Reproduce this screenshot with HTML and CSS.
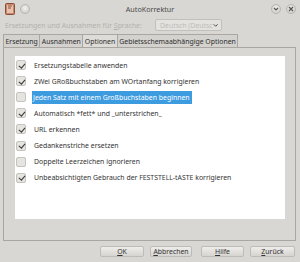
FILE: index.html
```html
<!DOCTYPE html>
<html lang="de">
<head>
<meta charset="utf-8">
<title>AutoKorrektur</title>
<link rel="stylesheet" href="styles.css">
</head>
<body>
<div class="window">
  <div class="titlebar">
    <div class="tb-left">
      <svg class="appicon" width="10" height="12" viewBox="0 0 10 12"><rect x="0.5" y="0.5" width="9" height="11" rx="1" fill="#c9876a" stroke="#8a4f3a"/><rect x="2" y="2" width="6" height="8" fill="#e9c3b0"/><path d="M3 3h4M3 5h3" stroke="#8a4f3a" stroke-width="1"/></svg>
      <span class="roundbtn"></span>
    </div>
    <div class="title">AutoKorrektur</div>
    <div class="tb-right">
      <span class="roundbtn"><svg width="6" height="6" viewBox="0 0 6 6"><path d="M1 2l2 2 2-2" fill="none" stroke="#555" stroke-width="1.2"/></svg></span>
      <span class="roundbtn"><svg width="6" height="6" viewBox="0 0 6 6"><path d="M1 1l4 4M5 1l-4 4" stroke="#555" stroke-width="1.2"/></svg></span>
    </div>
  </div>
  <div class="langrow">
    <span class="langlabel">Ersetzungen und Ausnahmen für <u>S</u>prache:</span>
    <span class="combo"><span class="combotext">Deutsch (Deutsc</span><svg width="7" height="5" viewBox="0 0 7 5"><path d="M1 1l2.5 2.5L6 1" fill="none" stroke="#444" stroke-width="1.3"/></svg></span>
  </div>
  <div class="tabs">
    <span class="tab">Ersetzung</span>
    <span class="tab">Ausnahmen</span>
    <span class="tab active">Optionen</span>
    <span class="tab">Gebietsschemaabhängige Optionen</span>
  </div>
  <div class="panel">
    <div class="list">
      <div class="row"><span class="cb checked"></span><span class="label">Ersetzungstabelle anwenden</span></div>
      <div class="row"><span class="cb checked"></span><span class="label">ZWei GRoßbuchstaben am WOrtanfang korrigieren</span></div>
      <div class="row"><span class="cb"></span><span class="label sel">Jeden Satz mit einem Großbuchstaben beginnen</span></div>
      <div class="row"><span class="cb checked"></span><span class="label">Automatisch *fett* und _unterstrichen_</span></div>
      <div class="row"><span class="cb checked"></span><span class="label">URL erkennen</span></div>
      <div class="row"><span class="cb checked"></span><span class="label">Gedankenstriche ersetzen</span></div>
      <div class="row"><span class="cb"></span><span class="label">Doppelte Leerzeichen ignorieren</span></div>
      <div class="row"><span class="cb checked"></span><span class="label">Unbeabsichtigten Gebrauch der FESTSTELL-tASTE korrigieren</span></div>
    </div>
  </div>
  <div class="buttons">
    <span class="btn w-ok"><u>O</u>K</span>
    <span class="btn w-ab"><u>A</u>bbrechen</span>
    <span class="btn w-hi"><u>H</u>ilfe</span>
    <span class="btn w-zu"><u>Z</u>urück</span>
  </div>
</div>
</body>
</html>
```
FILE: styles.css
```css
* { box-sizing: border-box; }
html, body { margin: 0; padding: 0; }
body {
  width: 300px;
  height: 262px;
  overflow: hidden;
  background: #d9d7d3;
  font-family: "Noto Sans", "DejaVu Sans", sans-serif;
  font-size: 6.9px;
  color: #3a3a3a;
}
.window {
  width: 300px;
  height: 262px;
  display: flex;
  flex-direction: column;
  background: #d9d7d3;
}
.titlebar {
  height: 17px;
  display: flex;
  align-items: center;
  justify-content: space-between;
  padding: 0 4px 0 5px;
  position: relative;
}
.tb-left, .tb-right { display: flex; align-items: center; gap: 5px; }
.roundbtn {
  width: 10px;
  height: 10px;
  border-radius: 50%;
  background: radial-gradient(circle at 50% 40%, #f2f1ef, #c9c6c1);
  border: 1px solid #b9b6b1;
  display: flex;
  align-items: center;
  justify-content: center;
}
.title {
  position: absolute;
  left: 0; right: 0;
  text-align: center;
  font-size: 7.2px;
  color: #4a4a4a;
  pointer-events: none;
}
.langrow {
  height: 16px;
  display: flex;
  align-items: center;
  padding-left: 5px;
  gap: 4px;
}
.langlabel { color: #b3b1ad; width: 146px; white-space: nowrap; }
.combo {
  width: 67px;
  height: 12px;
  border: 1px solid #c3c0bb;
  border-radius: 2px;
  background: #e4e2df;
  display: flex;
  align-items: center;
  justify-content: space-between;
  padding: 0 3px 0 4px;
  overflow: hidden;
  white-space: nowrap;
}
.combotext { color: #bdbbb7; }
.tabs {
  height: 13px;
  display: flex;
  padding-left: 3px;
  margin-top: 1px;
}
.tab {
  height: 13px;
  border: 1px solid #aaa7a2;
  border-bottom: none;
  padding: 0 1.5px;
  display: flex;
  align-items: center;
  color: #2e2e2e;
  background: #d4d2ce;
  margin-right: -1px;
  white-space: nowrap;
}
.tab.active { background: #dedcd8; }
.panel {
  margin: 0 4px 0 3px;
  height: 194px;
  border: 1px solid #aaa7a2;
  padding: 8px 10px 21px 11px;
}
.list {
  height: 100%;
  background: #fff;
  padding-top: 1px;
}
.row {
  height: 16.1px;
  display: flex;
  align-items: center;
  padding-left: 1px;
  white-space: nowrap;
}
.cb {
  width: 10px;
  height: 10px;
  border: 1px solid #c6c3be;
  border-radius: 2px;
  background: #e6e4e1;
  margin-right: 7px;
  position: relative;
  flex: none;
}
.cb.checked::after {
  content: "";
  position: absolute;
  left: 2.5px;
  top: 0.5px;
  width: 2.5px;
  height: 5px;
  border: solid #333;
  border-width: 0 1.6px 1.6px 0;
  transform: rotate(40deg);
}
.label { color: #333; padding: 1px 1px; }
.label.sel {
  background: #3d9be0;
  color: #fff;
  padding: 2px 2px 2px 1px;
  margin-left: -1px;
}
.buttons {
  display: flex;
  justify-content: flex-end;
  gap: 6px;
  padding: 5px 5px 0 0;
}
.btn {
  height: 11px;
  border: 1px solid #bfbcb7;
  border-radius: 2px;
  background: linear-gradient(#eeedeb, #d6d4d0);
  display: flex;
  align-items: center;
  justify-content: center;
  color: #333;
}
.w-ok { width: 44px; }
.w-ab { width: 42px; }
.w-hi { width: 43px; margin-left: 3px; }
.w-zu { width: 45px; }
```
